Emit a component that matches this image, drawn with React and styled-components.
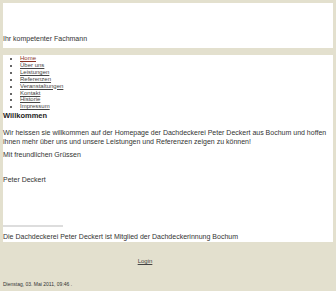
import React from "react";
import styled, { createGlobalStyle } from "styled-components";

const Global = createGlobalStyle`
  html, body { margin: 0; padding: 0; background: #e3e0ce; }
  body { font-family: "Liberation Sans", Arial, sans-serif; color: #222; }
`;

const Page = styled.div`
  padding: 3px 3px 0 3px;
  display: flex;
  flex-direction: column;
`;

const Header = styled.header`
  background: #fff;
  height: 45px;
  display: flex;
  align-items: flex-end;
  padding-bottom: 6px;
  box-sizing: border-box;
  font-size: 7px;
  color: #333;
`;

const Content = styled.main`
  background: #fff;
  margin-top: 7px;
  padding: 0 0 1px 0;
  font-size: 7px;
  line-height: 9px;
  color: #333;
`;

const Nav = styled.ul`
  margin: 0 0 1px 0;
  padding-left: 17px;
  list-style: disc;
  font-size: 6px;
  line-height: 6.9px;
`;

const NavItem = styled.li`
  a {
    color: ${(p) => (p.$active ? "#8a3324" : "#444")};
    text-decoration: underline;
  }
`;

const Title = styled.h1`
  margin: 0 0 8px 0;
  font-size: 7.5px;
  line-height: 9px;
  font-weight: bold;
  color: #222;
`;

const P = styled.p`
  margin: 0 0 ${(p) => p.$mb ?? 4}px 0;
`;

const Rule = styled.div`
  width: 60px;
  height: 2px;
  background: #dddddd;
  margin: 0 0 5px 0;
`;

const Footer = styled.footer`
  display: flex;
  flex-direction: column;
  font-size: 6px;
  color: #333;
`;

const LoginRow = styled.div`
  width: 284px;
  text-align: center;
  margin-top: 16px;
  a { color: #444; text-decoration: underline; }
`;

const DateLine = styled.div`
  margin-top: 17px;
  font-size: 5px;
  color: #333;
`;

const items = ["Home", "Über uns", "Leistungen", "Referenzen", "Veranstaltungen", "Kontakt", "Historie", "Impressum"];

export default function App() {
  return (
    <>
      <Global />
      <Page>
        <Header>Ihr kompetenter Fachmann</Header>
        <Content>
          <Nav>
            {items.map((t, i) => (
              <NavItem key={t} $active={i === 0}>
                <a href="#">{t}</a>
              </NavItem>
            ))}
          </Nav>
          <Title>Willkommen</Title>
          <P>
            Wir heissen sie willkommen auf der Homepage der Dachdeckerei Peter Deckert aus Bochum und hoffen ihnen mehr über uns und unsere Leistungen und Referenzen zeigen zu können!
          </P>
          <P $mb={16}>Mit freundlichen Grüssen</P>
          <P $mb={41}>Peter Deckert</P>
          <Rule />
          <P $mb={0}>Die Dachdeckerei Peter Deckert ist Mitglied der Dachdeckerinnung Bochum</P>
        </Content>
        <Footer>
          <LoginRow>
            <a href="#">Login</a>
          </LoginRow>
          <DateLine>Dienstag, 03. Mai 2011, 09:46 .</DateLine>
        </Footer>
      </Page>
    </>
  );
}
